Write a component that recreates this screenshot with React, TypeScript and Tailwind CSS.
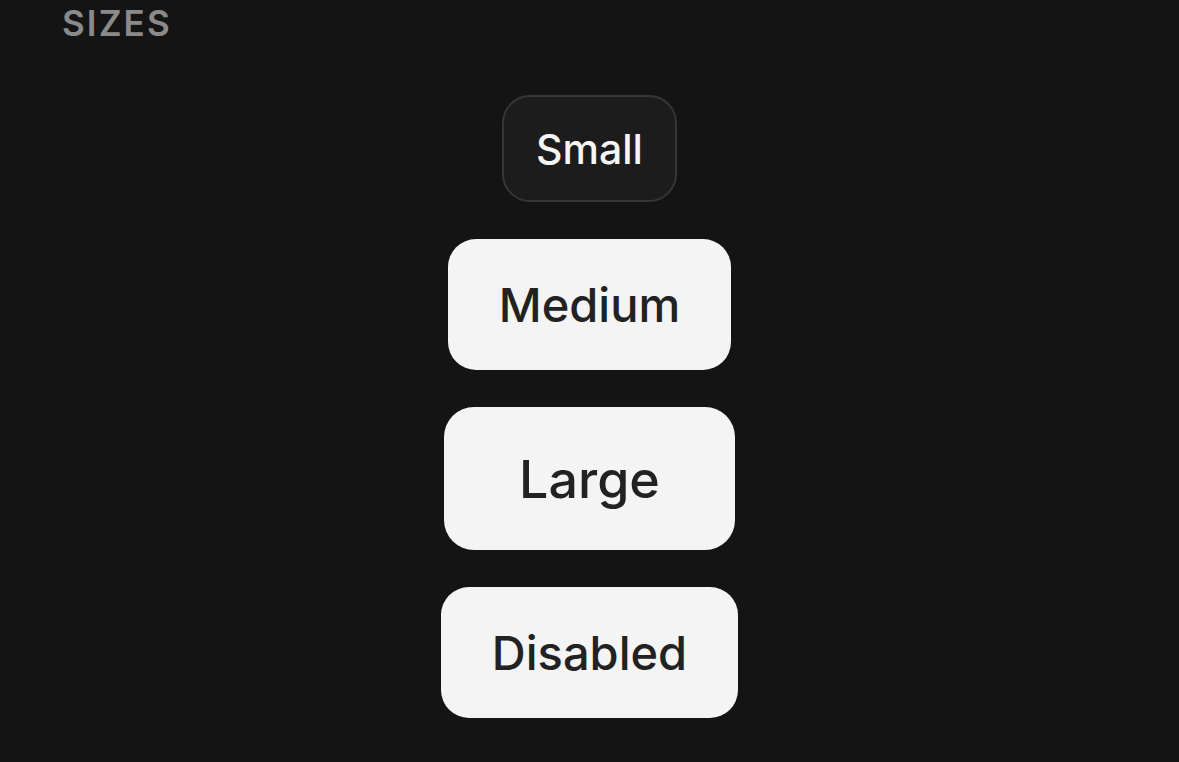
export default function App() {
  const buttons = [
    { label: "Small", cls: "h-[107px] px-[32px] text-[41px] rounded-[28px] bg-[#1c1c1c] text-[#f5f5f5] border-2 border-[#363636]" },
    { label: "Medium", cls: "h-[131px] px-[51px] text-[47px] rounded-[28px] bg-[#f4f4f4] text-[#222222]" },
    { label: "Large", cls: "h-[143px] px-[75px] text-[52px] rounded-[30px] bg-[#f4f4f4] text-[#222222]" },
    { label: "Disabled", cls: "h-[131px] px-[51px] text-[47px] rounded-[28px] bg-[#f4f4f4] text-[#222222]" },
  ];

  return (
    <div className="min-h-screen bg-[#141414] font-['Inter',sans-serif] overflow-hidden">
      <h2 className="pl-[62px] pt-[1px] text-[35px] leading-[44px] font-semibold tracking-[0.06em] text-[#8a8a8a]">
        SIZES
      </h2>
      <div className="mt-[50px] flex flex-col items-center gap-[37px]">
        {buttons.map((b) => (
          <button key={b.label} className={`flex items-center justify-center font-medium pt-[2px] ${b.cls}`}>
            {b.label}
          </button>
        ))}
      </div>
    </div>
  );
}
